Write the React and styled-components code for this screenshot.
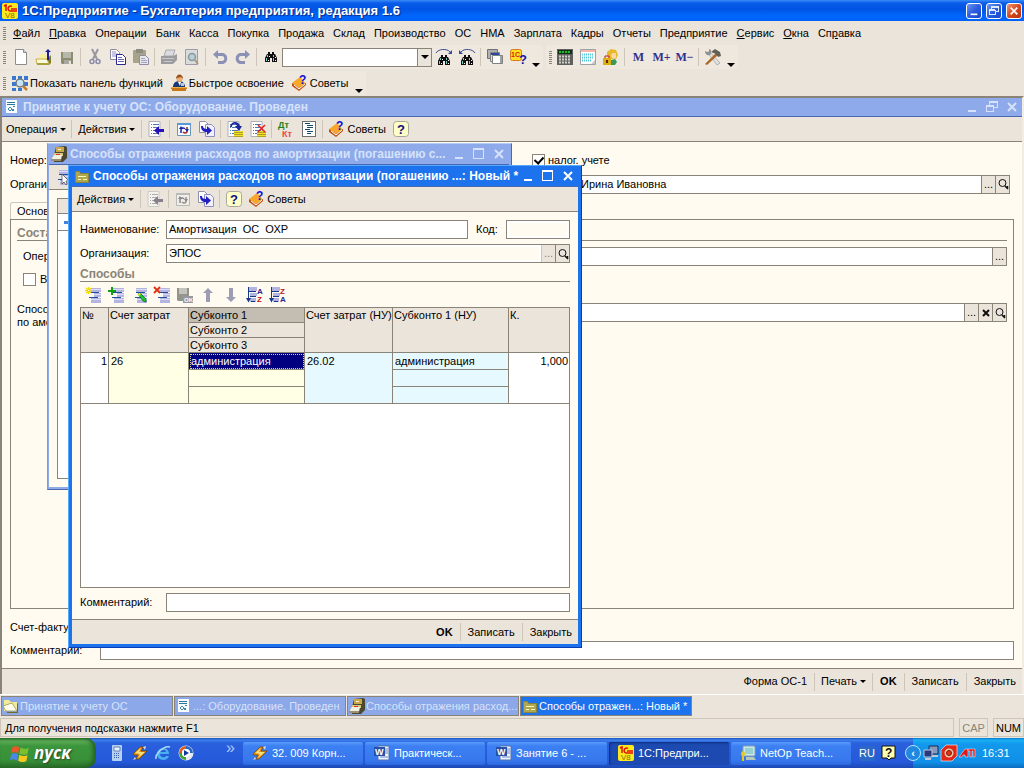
import React from 'react';
import styled, { createGlobalStyle } from 'styled-components';

/* ---------- icons ---------- */

const listLines = (
  <>
    <path d="M5 1h11v4H5zM9 6h7v4H9zM6 11h10v5H6z" fill="#b4b4e0" />
    <path d="M5 2h11v1H5zM9 7h7v1H9zM6 12h10v1H6z" fill="#dcdcf8" />
    <path d="M5 5h9v1H5zM4 10h9v1H4z" fill="#20509c" />
  </>
);

const sheet = (
  <>
    <path d="M1 .5h11v15H1z" fill="#fff" stroke="#b0b0b8" />
    <path d="M3 3h1v1H3zM5 3h6v1H5zM3 6h1v1H3zM5 6h6v1H5zM3 9h1v1H3zM5 9h6v1H5zM3 12h1v1H3zM5 12h6v1H5z" fill="#5078b0" />
  </>
);

const binoculars = (
  <>
    <path d="M5 4h2v2h2V4h2v2h1l2 4v4h-5v-4H7v4H2v-4l2-4h1z" fill="#101010" />
    <path d="M4 7h1v2H4zM3 10h1v3H3zM10 7h1v2h-1zM10 10h1v3h-1z" fill="#78d0c8" />
    <path d="M6 8h1v1H6zM12 9h1v1h-1zM5 12h1v1H5zM12 12h1v1h-1z" fill="#fff" />
  </>
);

const sortLines = (
  <>
    <path d="M3 0h8v4H3zM4 6h7v3H4zM4 11h6v4H4z" fill="#b4b4e0" />
    <path d="M2 0h1v11h2l-2.500 4.500L0 11h2zM3 4h7v1H3zM4 9h6v1H4zM5 14h4v1H5z" fill="#183888" />
  </>
);

const drawings = {
  v8: (
    <>
      <rect width="16" height="16" rx="2" fill="#ffe81c" />
      <path d="M2 3l2-1v6M10 3.500a2.500 2.500 0 1 0-1 4.500h6M9 6h6" fill="none" stroke="#e01010" strokeWidth="1.500" />
      <text x="3" y="15" fontSize="8" fontFamily="Liberation Sans" fill="#807000">V8</text>
    </>
  ),
  newDoc: (
    <>
      <path d="M2.500 .5h8l3 3v12h-11z" fill="#fff" stroke="#8c8c8c" />
      <path d="M10.500 .5v3h3" fill="#dcdcdc" stroke="#8c8c8c" />
    </>
  ),
  open: (
    <>
      <path d="M3 5h6l1 2h5v8H3z" fill="#f4f09c" />
      <path d="M11 10l4-4v8l-2 2h-2z" fill="#807c30" />
      <path d="M0 10h11l2 5H1z" fill="#f8f8e0" stroke="#c8b440" strokeWidth="1" />
      <path d="M1 14h12v2H1z" fill="#a8a038" />
      <path d="M12 11h1V3h2L12 0 9 3h2v8z" fill="#202090" />
    </>
  ),
  save: (
    <>
      <path d="M2 3h12v12H3l-1-1z" fill="#8c8c70" />
      <path d="M4 3h8v6H4z" fill="#b8b8a8" />
      <path d="M5 11h7v4H5z" fill="#a8a8a0" />
      <path d="M10 12h2v3h-2z" fill="#e8e4dc" />
    </>
  ),
  cut: (
    <>
      <path d="M5 0l5 10M11 0L6 10" stroke="#98989c" strokeWidth="2" fill="none" />
      <circle cx="5" cy="12.500" r="2" stroke="#8c8ca8" strokeWidth="1.500" fill="none" />
      <circle cx="11" cy="12.500" r="2" stroke="#8c8ca8" strokeWidth="1.500" fill="none" />
    </>
  ),
  copy: (
    <>
      <path d="M.5 .5h6l3 3v7h-9z" fill="#fff" stroke="#8c8c9c" />
      <path d="M2 3h4M2 5h6M2 7h6" stroke="#8c8cc0" />
      <path d="M6.500 5.500h6l3 3v7h-9z" fill="#fff" stroke="#282890" />
      <path d="M8 8.500h4M8 10.500h6M8 12.500h6" stroke="#6868b8" />
    </>
  ),
  paste: (
    <>
      <rect x="0" y="1" width="13" height="13" rx="1" fill="#a8a48c" />
      <path d="M3 0h7v4H3z" fill="#8c8c80" />
      <path d="M6.500 6.500h6l3 3v6h-9z" fill="#e8e8ec" stroke="#8c8ca8" />
      <path d="M8 9.500h4M8 11.500h6M8 13.500h6" stroke="#a0a0c0" />
    </>
  ),
  print: (
    <>
      <path d="M5 1h9l-2 6H3z" fill="#dcdce0" stroke="#a8a8b0" strokeWidth="1" />
      <path d="M0 7h12l4-2v6l-4 4H0z" fill="#9c9ca0" />
      <path d="M1 9h12v1H1zM3 12h8v1H3z" fill="#c8c8cc" />
    </>
  ),
  preview: (
    <>
      <path d="M1.500 .5h12v15h-12z" fill="#d8dcdc" stroke="#9c9ca4" />
      <circle cx="8" cy="8" r="3.500" fill="#b8d0d4" stroke="#88989c" strokeWidth="1.500" />
      <path d="M11 11l3 4" stroke="#a89880" strokeWidth="2" />
    </>
  ),
  undo: <path d="M6 1L1 5.500l5 4.500V7h4c3 0 3 5 0 5H6v3h4c7 0 7-11 0-11H6z" fill="#8c90b4" />,
  redo: <path d="M10 1l5 4.500-5 4.500V7H6c-3 0-3 5 0 5h4v3H6C-1 15-1 4 6 4h4z" fill="#8c90b4" />,
  find: <g transform="translate(0 -1)">{binoculars}</g>,
  findNext: (
    <>
      <g transform="translate(0 2)">{binoculars}</g>
      <path d="M0 4c2-4 11-5 14-1" stroke="#384898" fill="none" />
      <path d="M16 1v4h-4z" fill="#384898" />
    </>
  ),
  findPrev: (
    <>
      <g transform="translate(0 2)">{binoculars}</g>
      <path d="M16 4C14 0 5-1 2 3" stroke="#384898" fill="none" />
      <path d="M0 1v4h4z" fill="#384898" />
    </>
  ),
  windows: (
    <>
      <path d="M.5 .5h10v9H.5z" fill="#b0b0b0" stroke="#707070" />
      <path d="M3.500 3.500h9v9h-9z" fill="#f0e890" stroke="#808080" />
      <path d="M4 4h8v2H4z" fill="#2848a8" />
      <path d="M5.500 6.500h10v8h-10z" fill="#fff" stroke="#808080" />
      <path d="M13 7h2v7h-2z" fill="#a0a0a0" />
    </>
  ),
  about: (
    <>
      <rect x=".5" y=".5" width="11" height="11" rx="2" fill="#ffe01c" stroke="#d87818" />
      <text x="1" y="8" fontSize="7" fontWeight="bold" fontFamily="Liberation Sans" fill="#d82010">1С</text>
      <text x="9" y="15" fontSize="13" fontWeight="bold" fontFamily="Liberation Sans" fill="#1818a0">?</text>
    </>
  ),
  calc: (
    <>
      <path d="M0 0h16v16H0z" fill="#606060" />
      <path d="M1 1h14v4H1z" fill="#103010" />
      <path d="M2 3h12" stroke="#18c030" strokeWidth="2" strokeDasharray="2 1" />
      <path d="M2 7.500h12M2 10.500h12M2 13.500h12" stroke="#d0d0c8" strokeWidth="2" strokeDasharray="2 1" />
    </>
  ),
  calendar: (
    <>
      <path d="M.5 .5h15v15H.5z" fill="#fff" stroke="#a0a0a8" />
      <path d="M1 1h14v2H1z" fill="#f8b8a8" />
      <path d="M2 5.500h12M2 8.500h12M2 11.500h9" stroke="#50c8d8" strokeWidth="2" strokeDasharray="1 1" />
      <path d="M12 14l3-3v4h-4z" fill="#c8c8c8" />
    </>
  ),
  user: (
    <>
      <path d="M4 3l4-3 5 1 2 5-2 4H7L4 7z" fill="#e8b828" />
      <path d="M9 4h4v5l-3 1-2-3z" fill="#f8d8a8" />
      <path d="M8 11l4-1 2 3-2 3H7z" fill="#409858" />
      <path d="M0 9h8v7H0z" fill="#d8b010" />
      <path d="M2 9V7h4v2" stroke="#c02020" fill="none" />
      <path d="M3 11h2v3H3z" fill="#702010" />
    </>
  ),
  tools: (
    <>
      <path d="M2 3l10 13 3-2L5 3z" fill="#e0e0e0" stroke="#909090" strokeWidth=".6" />
      <path d="M11 4L0 15l2 1L13 6z" fill="#a86828" />
      <path d="M6 3l4-3 5 3 1 4-3 1-2-3z" fill="#606058" />
      <path d="M0 2c0 4 3 5 5 4l1-2V1L4 0v3H2z" fill="#909090" />
    </>
  ),
  functions: (
    <>
      <path d="M0 1h4v4H0zM6 1h4v4H6zM12 1h4v4h-4zM0 7h4v4H0zM0 13h4v3H0zM12 7h4v4h-4zM6 13h4v3H6z" fill="#3878d0" />
      <circle cx="8" cy="8" r="4" fill="#c8e4f4" stroke="#707880" strokeWidth="1.500" />
      <path d="M11 11l4 4" stroke="#c87828" strokeWidth="2.500" />
    </>
  ),
  quick: (
    <>
      <path d="M2 12c0-4 3-6 6-6s6 2 6 6z" fill="#183878" />
      <path d="M7 7h3l-1 4z" fill="#fff" />
      <circle cx="8.500" cy="4" r="3" fill="#e8b078" />
      <path d="M5 4c0-6 7-6 7 0l-2-2-4 1z" fill="#985018" />
      <path d="M10 8h3v3h-3z" fill="#b8c8d8" />
      <path d="M0 12h16v2h-1v2H1v-2H0z" fill="#c87818" />
      <path d="M0 12h16v1H0z" fill="#f0b048" />
    </>
  ),
  tips: (
    <>
      <path d="M0 8l8-6 6 7-7 4z" fill="#f8a828" />
      <path d="M0 8v3l7 5 7-6V8l-7 5z" fill="#c05010" />
      <path d="M2 10l5 4 6-5" stroke="#fff" fill="none" />
      <text x="7" y="9" fontSize="12" fontWeight="bold" fontFamily="Liberation Sans" fill="#1010d0">?</text>
    </>
  ),
  help: (
    <>
      <rect x=".5" y=".5" width="15" height="15" rx="3" fill="#ffffc8" stroke="#a8a898" />
      <text x="4" y="13" fontSize="13" fontWeight="bold" fontFamily="Liberation Sans" fill="#101080">?</text>
    </>
  ),
  doc: (
    <>
      <path d="M2 1h11v13H2z" fill="#f8fcff" />
      <path d="M3 3h8v1H3zM3 5h8v1H3z" fill="#2878a0" />
      <path d="M5 8h2v1h1v2H7v1H5v-1H4V9h1zM9 7h2v1H9zM8 10h2v2H8z" fill="#3888b0" />
      <path d="M5 9h2v2H5z" fill="#fff" />
    </>
  ),
  goto: (
    <>
      {sheet}
      <path d="M6 9.500L11 5v3h5v3h-5v3z" fill="#2810b8" />
    </>
  ),
  refresh: (
    <>
      <path d="M1.500 2.500h13v12h-13z" fill="#f4f8ff" stroke="#6898b8" />
      <path d="M1 2h14v2H1z" fill="#5898d8" />
      <path d="M5 12V9c0-2 3-3 4-1" stroke="#1828a0" fill="none" strokeWidth="1.500" />
      <path d="M11 6v4c0 3-3 2-4 1" stroke="#a02828" fill="none" strokeWidth="1.500" />
      <path d="M3 8h4l-2-3zM9 8h4l-2 3z" fill="#1828a0" />
    </>
  ),
  copyTo: (
    <>
      <path d="M.5 .5h6l3 3v8h-9z" fill="#fff" stroke="#9090a8" />
      <path d="M6.500 3.500h6l3 3v9h-9z" fill="#f0f0ff" stroke="#9090c0" />
      <path d="M2 5h2c0 2 1 3 4 3V5l5 4.500L8 14v-3C4 11 2 9 2 5z" fill="#2020c0" />
    </>
  ),
  post: (
    <>
      {sheet}
      <path d="M7 10h9v6H7z" fill="#f0e028" />
      <path d="M7 11.500h9M7 13.500h9M7 15.500h9" stroke="#b0a020" />
      <path d="M3 6c1-7 9-6 10-1h2l-3 5-4-5h2C9 2 5 2 5 6z" fill="#1828a0" />
    </>
  ),
  unpost: (
    <>
      {sheet}
      <path d="M7 10h9v6H7z" fill="#f0e028" />
      <path d="M7 11.500h9M7 13.500h9M7 15.500h9" stroke="#b0a020" />
      <path d="M8 4l7 7M15 4l-7 7" stroke="#e02020" strokeWidth="1.500" />
    </>
  ),
  debit: (
    <>
      <text x="0" y="7" fontSize="9" fontWeight="bold" fontFamily="Liberation Sans" fill="#288018">Дт</text>
      <text x="4" y="16" fontSize="9" fontWeight="bold" fontFamily="Liberation Sans" fill="#f04840">Кт</text>
    </>
  ),
  structure: (
    <>
      <path d="M1.500 .5h13v15h-13z" fill="#fff" stroke="#707070" />
      <path d="M1 0h1v16H1zM14 0h1v16h-1z" fill="#707070" />
      <path d="M4 2.500h5M6 4.500h6M6 6.500h6M4 8.500h5M6 10.500h6M6 12.500h4" stroke="#184868" />
    </>
  ),
  cabinet: (
    <>
      <path d="M5 1l9-1 2 1v11l-4 4H3V9z" fill="#4c4830" />
      <path d="M5 1h8v5H5z" fill="#c8a848" />
      <path d="M3 7h9v3H3z" fill="#d8c888" />
      <path d="M1 12l2-3h8l-1 5H1z" fill="#f0f0e0" />
      <path d="M7 3h3v1H7z" fill="#f8f8e0" />
      <path d="M5 8h4v1H5z" fill="#d83818" />
      <path d="M0 13h10v2H0z" fill="#989070" />
    </>
  ),
  folder: (
    <>
      <path d="M1.500 3.500h4l1 2h8v9h-13z" fill="#b0a850" stroke="#88843c" />
      <path d="M4 8h8v1H4zM4 11h3v1H4zM9 11h4v1H9z" fill="#fff8b8" />
    </>
  ),
  folderOpen: (
    <>
      <path d="M1 2h5l2 2h6v9H1z" fill="#f0ec98" />
      <path d="M0 8l9-3 5 8H3z" fill="#fdfdf0" stroke="#a09848" strokeWidth=".8" />
      <path d="M14 5l1 1v9H4v-1h10z" fill="#706c28" />
    </>
  ),
  rowNew: (
    <>
      {listLines}
      <path d="M3.500 0v7M0 3.500h7M1 1l5 5M6 1L1 6" stroke="#f0d800" strokeWidth="1.200" />
      <path d="M3 3h1v1H3z" fill="#fff" />
    </>
  ),
  rowAdd: (
    <>
      {listLines}
      <path d="M3 0h2v3h3v2H5v3H3V5H0V3h3z" fill="#10a010" />
    </>
  ),
  rowEdit: (
    <>
      {listLines}
      <path d="M7 7l2-1 6 6v3l-3-1z" fill="#18c830" stroke="#086018" strokeWidth=".7" />
      <path d="M7 7l2-1 1 1-2 2z" fill="#f8e820" />
    </>
  ),
  rowDelete: (
    <>
      {listLines}
      <path d="M0 0l6 6M6 0L0 6" stroke="#e03010" strokeWidth="1.800" />
    </>
  ),
  rowSave: (
    <>
      <path d="M0 1h12v13H1l-1-1z" fill="#94948c" />
      <path d="M2 1h8v6H2z" fill="#c4c4bc" />
      <path d="M6 9h10v7H6z" fill="#9898a0" />
      <text x="7" y="15" fontSize="6" fontWeight="bold" fontFamily="Liberation Sans" fill="#fff">OK</text>
    </>
  ),
  up: <path d="M8 1l5 5h-3v9H6V6H3z" fill="#9c9cb4" />,
  down: <path d="M8 15l5-5h-3V1H6v9H3z" fill="#9c9cb4" />,
  sortAsc: (
    <>
      {sortLines}
      <text x="11" y="7" fontSize="8" fontWeight="bold" fontFamily="Liberation Sans" fill="#302890">A</text>
      <text x="11" y="15" fontSize="8" fontWeight="bold" fontFamily="Liberation Sans" fill="#c01020">Z</text>
    </>
  ),
  sortDesc: (
    <>
      {sortLines}
      <text x="11" y="7" fontSize="8" fontWeight="bold" fontFamily="Liberation Sans" fill="#c01020">Z</text>
      <text x="11" y="15" fontSize="8" fontWeight="bold" fontFamily="Liberation Sans" fill="#302890">A</text>
    </>
  ),
  rowCursor: (
    <>
      {listLines}
      <path d="M8 5v10l2-2 2 3 1-1-1-3h3z" fill="#fff" stroke="#404040" strokeWidth=".7" />
    </>
  ),
  flag: (
    <>
      <path d="M1 3c3-2 5-1 6 0L6 8C5 7 3 6 0 8z" fill="#e85828" />
      <path d="M8 3c2 1 5 2 7 0l-1 5c-2 2-5 1-7 0z" fill="#78c030" />
      <path d="M0 9c3-2 5-1 6 0l-1 5c-2-1-4-2-6 0z" fill="#4888e8" />
      <path d="M7 9c2 1 5 2 7 0l-1 5c-2 2-5 1-7 0z" fill="#f8c820" />
    </>
  ),
  pda: (
    <>
      <rect x="3" y="0" width="10" height="16" rx="1" fill="#b8d0f0" />
      <path d="M5 2h6v4H5z" fill="#e8f4ff" stroke="#6080b8" />
      <path d="M5 8.500h6M5 10.500h6M5 12.500h6" stroke="#3860a8" strokeDasharray="1 1" />
    </>
  ),
  winamp: (
    <>
      <path d="M2 8l6-6h3L9 6h6l-8 8H4l2-4H1z" fill="#e89018" stroke="#784808" strokeWidth=".8" />
      <path d="M3 8l6-5-2 4h6l-7 6 2-4z" fill="#f8e078" />
      <path d="M11 2l3-1-1 4zM3 12l-2 3 3-1z" fill="#d8d8d8" />
    </>
  ),
  ie: (
    <>
      <path d="M14 9H5c0 4 5 4 6 2h3c-2 6-12 5-12-2s12-8 12 0zM5 7h6C11 4 5 4 5 7z" fill="#48b0f0" />
      <path d="M1 14C0 9 9 0 15 2" fill="none" stroke="#a8dcf8" strokeWidth="1.500" />
    </>
  ),
  player: (
    <>
      <circle cx="8" cy="8" r="7.500" fill="#e8e8f0" />
      <path d="M8 1a7 7 0 0 0-7 7h3a4 4 0 0 1 4-4z" fill="#e06018" />
      <path d="M8 1a7 7 0 0 1 7 7h-3a4 4 0 0 0-4-4z" fill="#2868c8" />
      <path d="M8 15a7 7 0 0 1-7-7h3a4 4 0 0 0 4 4z" fill="#48a030" />
      <circle cx="8" cy="8" r="4" fill="#fff" />
      <path d="M6 5l5 3-5 3z" fill="#1838a0" />
    </>
  ),
  word: (
    <>
      <path d="M4 1h11v14H4z" fill="#f0f4ff" stroke="#5070b0" />
      <path d="M11 4h3M11 6h3M11 8h3M6 12h8" stroke="#6888c8" />
      <path d="M0 2h11v9H0z" fill="#2850a8" />
      <text x="1" y="10" fontSize="9" fontWeight="bold" fontFamily="Liberation Sans" fill="#fff">W</text>
    </>
  ),
  netop: (
    <>
      <rect x="3" y="1" width="12" height="10" rx="1" fill="#c8e8e8" stroke="#88a0b0" />
      <path d="M5 3h8v6H5z" fill="#98d0d0" />
      <path d="M6 12h8l2 3H6z" fill="#b8c8b8" />
      <path d="M3 6a3 3 0 0 1 1 5v5H2v-5a3 3 0 0 1 1-5z" fill="#e8c820" />
    </>
  ),
  langHelp: (
    <>
      <path d="M1 1h13v12h-4l-2 2-2-2H1z" fill="#ffffb0" stroke="#101010" />
      <text x="4" y="12" fontSize="12" fontWeight="bold" fontFamily="Liberation Sans" fill="#101010">?</text>
    </>
  ),
  network: (
    <>
      <path d="M6 1h9v8H6z" fill="#8898b8" stroke="#182858" />
      <path d="M1 5h8v7H1z" fill="#283878" stroke="#b8c8e8" />
      <path d="M2 13h6v2H2zM9 10h6v2H9z" fill="#c0c8d8" />
    </>
  ),
  shield: (
    <>
      <path d="M5 0h11v11l-5 5H0V5z" fill="#e02818" stroke="#fff" strokeWidth=".6" />
      <circle cx="8" cy="8" r="4.500" fill="#e8c8a0" />
      <circle cx="8" cy="8" r="2.500" fill="#d83818" stroke="#901008" />
    </>
  ),
  ati: (
    <>
      <path d="M0 12l6-8h3v8H6v-2H4l-1 2z" fill="#e01818" stroke="#fff" strokeWidth=".5" />
      <path d="M9 4h7v8h-2V6h-1v6h-2V6H9z" fill="#e01818" stroke="#fff" strokeWidth=".5" />
    </>
  ),
  lens: (
    <>
      <circle cx="7.500" cy="7" r="3.500" fill="none" stroke="#101010" />
      <path d="M10 10l3 3M12.500 10v3" stroke="#101010" strokeWidth="1.500" />
    </>
  ),
  clear: <path d="M5 5l6 6M11 5l-6 6" stroke="#101010" strokeWidth="2" fill="none" />,
};

const Svg = styled.svg`
  display: block;
  flex: none;
  overflow: visible;
  ${({ $off }) => $off && 'filter: grayscale(0.8); opacity: 0.5;'}
`;

const Icon = ({ name, off }) => (
  <Svg width="16" height="16" viewBox="0 0 16 16" aria-hidden="true" $off={off}>{drawings[name]}</Svg>
);

const MinGlyph = () => <Svg width="12" height="12" viewBox="0 0 12 12"><path d="M2 9h8v2H2z" fill="currentColor" /></Svg>;
const MaxGlyph = () => (
  <Svg width="12" height="12" viewBox="0 0 12 12" shapeRendering="crispEdges">
    <path d="M.5 .5h10v10H.5zM.5 1.500h10" fill="none" stroke="currentColor" />
  </Svg>
);
const RestoreGlyph = () => (
  <Svg width="12" height="12" viewBox="0 0 12 12" shapeRendering="crispEdges">
    <path d="M3.500 4V.5h8v6H8M3.500 1.500h8M.500 4.500h7v6h-7zM.5 5.500h7" fill="none" stroke="currentColor" />
  </Svg>
);
const CloseGlyph = () => <Svg width="12" height="12" viewBox="0 0 12 12"><path d="M2 2l8 8M10 2l-8 8" fill="none" stroke="currentColor" strokeWidth="2" /></Svg>;

/* ---------- shared parts ---------- */

const GlobalStyle = createGlobalStyle`
  * { box-sizing: border-box; }
  body { margin: 0; }
  body, button, input, select, table {
    font: 11px/13px 'Liberation Sans', Arial, sans-serif;
    color: #000;
  }
  button { background: none; border: 0; padding: 0; }
`;

const Screen = styled.div`
  display: flex;
  flex-direction: column;
  min-height: 100vh;
  background: #ebe4da;
  overflow: hidden;
  white-space: nowrap;
`;

const AppTitle = styled.header`
  display: flex;
  align-items: center;
  gap: 4px;
  height: 21px;
  padding: 0 2px;
  background: linear-gradient(#3a8cf8 0, #0a5cea 3px, #0054e3 9px, #0066fc 16px, #0062f8 21px);
  color: #fff;

  h1 {
    flex: 1;
    margin: 0;
    font: bold 13px/20px 'Liberation Sans', Arial, sans-serif;
    text-shadow: 1px 1px 1px #0a2a80;
  }
`;

const CaptionButton = styled.button`
  display: flex;
  align-items: center;
  justify-content: center;
  width: 16px;
  height: 16px;
  border: 1px solid #fff;
  border-radius: 3px;
  background: ${({ $close }) => ($close ? 'linear-gradient(135deg, #f09878, #d84820 50%, #b83010)' : 'linear-gradient(135deg, #7098f0, #2c5ce0 50%, #1848c8)')};
  color: #fff;

  svg { width: 10px; height: 10px; }
`;

const MenuBar = styled.nav`
  display: flex;
  align-items: center;
  gap: 9px;
  height: 24px;
  padding-left: 3px;

  a {
    color: #000;
    text-decoration: none;
  }
`;

const Grip = styled.span`
  width: 3px;
  height: 13px;
  margin-right: ${({ $space }) => $space || 3}px;
  background: repeating-linear-gradient(#8a8478 0 1px, transparent 1px 2px);
`;

const Toolbars = styled.div`
  display: flex;
  gap: 3px;
  padding-bottom: ${({ $below }) => $below}px;
`;

const Toolbar = styled.div`
  display: flex;
  align-items: center;
  height: 24px;
  padding-left: 3px;
  background: #eee8df;
  border-radius: 3px;
`;

const IconButton = styled.button`
  display: flex;
  align-items: center;
  justify-content: center;
  flex: none;
  width: 23px;
  height: 22px;
`;

const MemoryButton = styled(IconButton)`
  font: bold 12px/13px 'Liberation Serif', serif;
  color: #303090;
`;

const TextButton = styled.button`
  display: flex;
  align-items: center;
  gap: 2px;
  height: 22px;
  padding: 0 ${({ $pad }) => $pad || 4}px;
  font-weight: ${({ $bold }) => ($bold ? 'bold' : 'normal')};
`;

const Divider = styled.span`
  flex: none;
  width: 1px;
  height: 18px;
  margin: 0 2px;
  background: #cdc5b8;
`;

const Caret = styled.span`
  margin-left: 1px;
  border: solid transparent;
  border-width: 3px 3px 0;
  border-top-color: #000;
`;

const DropMark = styled.i`
  display: block;
  border: solid transparent;
  border-width: 4px 4px 0;
  border-top-color: #000;
`;

const MoreButton = styled.button`
  align-self: flex-end;
  height: 8px;
  padding: 0 3px;
`;

const ComboBox = styled.div`
  display: flex;
  width: 150px;
  height: 19px;
  border: 1px solid #8a8478;
  background: #fff;

  select {
    flex: 1;
    min-width: 0;
    border: 0;
    background: #fff;
    appearance: none;
  }

  span {
    display: flex;
    align-items: center;
    justify-content: center;
    width: 14px;
    border-left: 1px solid #8a8478;
    background: #ebe4da;
    pointer-events: none;
  }
`;

const ActionBar = styled.div`
  display: flex;
  align-items: center;
  justify-content: ${({ $end }) => ($end ? 'flex-end' : 'flex-start')};
  flex: none;
  height: ${({ $height }) => $height || 25}px;
  padding: 0 1px;
  background: #ebe4da;
  border: solid #8a8478;
  border-width: ${({ $end }) => ($end ? '1px 0 0' : '0 0 1px')};
`;

const WindowTitle = styled.div`
  display: flex;
  align-items: center;
  flex: none;
  gap: 3px;
  height: ${({ $height }) => $height || 21}px;
  padding-right: 4px;
  padding-left: 2px;
  background: ${({ $active }) => ($active ? '#1d72ee' : '#8eaaea')};
  border-bottom: 1px solid #4a68b0;
  color: ${({ $active }) => ($active ? '#fff' : '#d6e2fb')};

  h2 {
    flex: 1;
    margin: 0;
    font: bold 12px/18px 'Liberation Sans', Arial, sans-serif;
  }
`;

const WindowControls = styled.div`
  display: flex;
  flex: none;
  gap: 8px;

  button { color: inherit; }
`;

const Field = styled.div`
  display: flex;
  flex: ${({ $width }) => ($width ? `0 0 ${$width}px` : '1')};
  min-width: 0;
  height: 19px;
  border: 1px solid #8a8478;
  background: #fff;

  input {
    flex: 1;
    min-width: 0;
    padding: 0 ${({ $locked }) => ($locked ? 0 : 2)}px;
    border: ${({ $locked }) => ($locked ? '2px solid #fff' : '0')};
    background: ${({ $locked }) => ($locked ? '#fffbf0' : '#fff')};
    outline: 0;
  }

  button {
    display: flex;
    align-items: center;
    justify-content: center;
    width: 14px;
    border-left: 1px solid #8a8478;
    background: #ebe4da;
  }

  button:disabled {
    border-left-color: #cdc5b8;
    color: #8a8478;
  }
`;

const GroupTitle = styled.h3`
  flex: none;
  height: 14px;
  margin: 0;
  border-bottom: 1px solid #8a8478;
  color: #8a8478;
  font: bold 12px/13px 'Liberation Sans', Arial, sans-serif;
`;

const CheckBox = styled.input`
  appearance: none;
  display: grid;
  place-items: center;
  width: 13px;
  height: 13px;
  margin: 0;
  border: 1px solid #8a8478;
  background: #fff;

  &:checked::before {
    content: '';
    width: 4px;
    height: 7px;
    margin-bottom: 2px;
    border: solid #000;
    border-width: 0 2px 2px 0;
    transform: rotate(42deg);
  }
`;

/* ---------- document window ---------- */

const Workspace = styled.main`
  position: relative;
  display: flex;
  flex: 1;
  flex-direction: column;
  border: 2px solid #8a8478;
  border-right-color: #f2ede4;
  border-bottom: 0;
  background: #fffbf0;
`;

const DocBody = styled.div`
  display: flex;
  flex: 1;
  flex-direction: column;
  padding: 6px 8px 2px;
`;

const DocRow = styled.div`
  display: flex;
  align-items: center;
  flex: none;
  height: 24px;
  padding-right: ${({ $right }) => $right || 0}px;

  > label:first-child, > span:first-child { width: 90px; }
`;

const InvoiceRow = styled(DocRow)`
  margin-top: 6px;
`;

const CommentRow = styled(DocRow)`
  height: 19px;
  margin-bottom: 8px;
  padding: 0 8px;
`;

const RightHalf = styled.div`
  display: flex;
  align-items: center;
  flex: 1;
  gap: 3px;
  margin-left: ${({ $left }) => $left}px;
`;

const TabHead = styled.button`
  align-self: flex-start;
  height: 17px;
  margin-top: 6px;
  padding: 0 6px;
  border: 1px solid #cdc5b8;
  border-bottom: 0;
  border-radius: 3px 3px 0 0;
  background: #fffbf0;
`;

const TabPanel = styled.section`
  display: flex;
  flex: 1;
  flex-direction: column;
  padding: 7px 6px;
  border: 1px solid #8a8478;
`;

const PanelRow = styled(DocRow)`
  align-items: ${({ $top }) => ($top ? 'flex-start' : 'center')};
  gap: 4px;
  height: auto;
  min-height: 19px;
  margin-top: ${({ $gap }) => $gap}px;
  padding-left: ${({ $indent }) => $indent || 0}px;
`;

/* ---------- floating windows ---------- */

const FloatWindow = styled.section`
  position: absolute;
  left: ${({ $x }) => $x}px;
  top: ${({ $y }) => $y}px;
  display: flex;
  flex-direction: column;
  width: ${({ $w }) => $w}px;
  height: ${({ $h }) => $h}px;
  padding: ${({ $active }) => ($active ? '0 3px 3px' : '0 2px 2px 1px')};
  border: 1px solid;
  border-color: ${({ $active }) => ($active ? '#54aaff #0a3cb8 #0a3cb8 #54aaff' : '#b4ccf8 #4a68b0 #4a68b0 #7c9ce0')};
  background: ${({ $active }) => ($active ? '#1d72ee' : '#8eaaea')};
`;

const ListBody = styled.div`
  flex: 1;
  padding: 8px;
  background: #fffbf0;
`;

const ListBox = styled.div`
  height: 100%;
  border: 1px solid #8a8478;
  background: #fff;
`;

const ListHead = styled.div`
  height: 15px;
  border-bottom: 1px solid #8a8478;
  background: #ebe4da;
`;

const ListRow = styled.div`
  height: 17px;
  padding: 7px 6px;
  border-bottom: 1px solid #8a8478;

  &::before {
    content: '';
    display: block;
    width: 10px;
    height: 3px;
    background: #4880e0;
  }
`;

const DialogBody = styled.div`
  display: flex;
  flex: 1;
  flex-direction: column;
  gap: 5px;
  padding: 8px 8px 7px;
  background: #fffbf0;
`;

const DialogRow = styled.div`
  display: flex;
  align-items: center;
  flex: none;
  height: 19px;

  > label:first-child { width: 86px; }
  > label:nth-of-type(2) { width: 30px; margin-left: 8px; }
`;

const WaysSection = styled.section`
  display: flex;
  flex: 1;
  flex-direction: column;
`;

const RowTools = styled.div`
  display: flex;
  flex: none;
  height: 25px;
  padding: 2px 0 0 1px;
`;

const GridBox = styled.div`
  flex: 1;
  border: 1px solid #8a8478;
  border-top: 0;
  background: #fff;
`;

const Grid = styled.table`
  width: calc(100% + 2px);
  margin: 0 -1px;
  border-collapse: collapse;
  table-layout: fixed;

  th, td {
    border: 1px solid #8a8478;
    font-weight: normal;
    text-align: left;
    vertical-align: top;
    line-height: 13px;
  }

  th { height: 15px; padding: 1px 1px 0; background: #ebe4da; }
  td { height: 17px; padding: 2px 2px 0; }
`;

const HeadCell = styled.th`
  && { background: ${({ $current }) => ($current ? '#c4bdb2' : '#ebe4da')}; }
`;

const Cell = styled.td`
  background: ${({ $tone }) => ({ yellow: '#ffffe6', blue: '#e6f9ff' }[$tone] || '#fff')};
  ${({ $selected }) => $selected && 'background: #000080; color: #fff; outline: 1px dotted #d8d890; outline-offset: -2px;'}
  && { text-align: ${({ $right }) => ($right ? 'right' : 'left')}; ${({ $right }) => $right && 'padding-right: 1px;'} }
`;

/* ---------- bottom bars ---------- */

const WindowTabs = styled.nav`
  display: flex;
  gap: 1px;
  height: 24px;
  padding: 1px 1px 0;
  border-top: 1px solid #fff;
`;

const WindowTab = styled.button`
  display: flex;
  align-items: center;
  gap: 1px;
  width: 172px;
  height: 20px;
  overflow: hidden;
  padding-left: 1px;
  border: 1px solid #8a8478;
  background: ${({ $active }) => ($active ? '#1d72ee' : '#8ca8e8')};
  color: ${({ $active }) => ($active ? '#fff' : '#d6e2fb')};
`;

const StatusBar = styled.footer`
  display: flex;
  gap: 5px;
  height: 20px;
  padding-bottom: 1px;
`;

const StatusCell = styled.span`
  flex: ${({ $wide }) => ($wide ? 1 : 'none')};
  padding: 3px 2px 2px ${({ $wide }) => ($wide ? 4 : 2)}px;
  border: 1px solid #cdc5b8;
  color: ${({ $off }) => ($off ? '#8a8478' : '#000')};
`;

const TaskBar = styled.div`
  display: flex;
  height: 30px;
  background: linear-gradient(#1c50b8 0, #3c80ee 2px, #2a60dc 5px, #245ada 24px, #1c48b4 30px);
  color: #fff;
`;

const StartButton = styled.button`
  display: flex;
  align-items: center;
  gap: 4px;
  width: 96px;
  padding-left: 11px;
  border-radius: 0 10px 10px 0;
  background: linear-gradient(#2c7c2c 0, #5cac58 3px, #3c963c 8px, #389038 22px, #286c28 30px);
  box-shadow: inset -3px 0 4px #246024;
  color: #fff;
  font: italic bold 17px/24px 'Open Sans', sans-serif;
  text-shadow: 1px 1px 2px #204820;

  svg { width: 19px; height: 19px; }
`;

const QuickLaunch = styled.div`
  display: flex;
  align-items: center;
  flex: none;
  width: 147px;
  padding-left: 9px;

  i {
    margin: 0 0 12px 29px;
    font: 16px/13px 'Liberation Sans', sans-serif;
    color: #a8ccff;
  }
`;

const Tasks = styled.div`
  display: flex;
  align-items: center;
  flex: 1;
  gap: 2px;
  min-width: 0;
`;

const TaskButton = styled.button`
  display: flex;
  align-items: center;
  gap: 4px;
  flex: 0 1 120px;
  height: 23px;
  overflow: hidden;
  padding-left: 9px;
  border-radius: 2px;
  background: ${({ $active }) => ($active ? '#1c4ab0' : 'linear-gradient(#5c9cfc 0, #3c80f2 4px, #3878ee 18px, #2c68dc 23px)')};
  box-shadow: ${({ $active }) => ($active ? 'inset 1px 1px 2px #0c2c78' : 'none')};
  color: #fff;
`;

const Language = styled.div`
  display: flex;
  align-items: center;
  gap: 6px;
  width: 54px;

  span {
    padding: 1px 0;
    background: #2c68c8;
  }
`;

const Tray = styled.div`
  display: flex;
  align-items: center;
  gap: 2px;
  flex: none;
  width: 111px;
  background: linear-gradient(#0c78d0 0, #18b0f4 2px, #1298ec 6px, #1090e8 24px, #0c6cc0 30px);

  time { margin-left: 5px; }
`;

const TrayToggle = styled.button`
  display: grid;
  place-items: center;
  width: 16px;
  height: 16px;
  margin-left: -8px;
  border: 1px solid #b8e0ff;
  border-radius: 8px;
  background: #2088e0;
  color: #fff;
  font-weight: bold;
`;

/* ---------- page ---------- */

const menu = [
  ['Ф', 'айл'], ['П', 'равка'], ['', 'Операции'], ['', 'Банк'], ['', 'Касса'], ['', 'Покупка'],
  ['', 'Продажа'], ['', 'Склад'], ['', 'Производство'], ['', 'ОС'], ['', 'НМА'], ['', 'Зарплата'],
  ['', 'Кадры'], ['', 'Отчеты'], ['', 'Предприятие'], ['С', 'ервис'], ['О', 'кна'],
];

const Tool = ({ name, off }) => (
  <IconButton type="button" aria-label={name}><Icon name={name} off={off} /></IconButton>
);

const More = () => <MoreButton type="button" aria-label="Еще"><DropMark /></MoreButton>;

const WindowButtons = ({ restore }) => (
  <WindowControls>
    <button type="button" aria-label="Свернуть"><MinGlyph /></button>
    <button type="button" aria-label="Развернуть">{restore ? <RestoreGlyph /> : <MaxGlyph />}</button>
    <button type="button" aria-label="Закрыть"><CloseGlyph /></button>
  </WindowControls>
);

const LookupButton = () => <button type="button" aria-label="Открыть"><Icon name="lens" /></button>;

const MainToolbars = () => (
  <>
    <Toolbars $below={2}>
      <Toolbar>
        <Grip />
        <Tool name="newDoc" /><Tool name="open" /><Tool name="save" />
        <Divider />
        <Tool name="cut" /><Tool name="copy" /><Tool name="paste" />
        <Divider />
        <Tool name="print" /><Tool name="preview" />
        <Divider />
        <Tool name="undo" /><Tool name="redo" />
        <Divider />
        <Tool name="find" />
        <ComboBox>
          <select aria-label="Поиск"><option> </option></select>
          <span><DropMark /></span>
        </ComboBox>
        <Tool name="findNext" /><Tool name="findPrev" />
        <Divider />
        <Tool name="windows" /><Tool name="about" />
        <More />
      </Toolbar>
      <Toolbar>
        <Grip $space={1} />
        <Tool name="calc" /><Tool name="calendar" /><Tool name="user" />
        <Divider />
        <MemoryButton type="button">M</MemoryButton>
        <MemoryButton type="button">M+</MemoryButton>
        <MemoryButton type="button">M−</MemoryButton>
        <Divider />
        <Tool name="tools" />
        <More />
      </Toolbar>
    </Toolbars>
    <Toolbars $below={1}>
      <Toolbar>
        <Grip $space={2} />
        <TextButton type="button"><Icon name="functions" />Показать панель функций</TextButton>
        <TextButton type="button"><Icon name="quick" />Быстрое освоение</TextButton>
        <TextButton type="button"><Icon name="tips" />Советы</TextButton>
        <More />
      </Toolbar>
    </Toolbars>
  </>
);

const DocumentWindow = () => (
  <>
    <WindowTitle $height={19}>
      <Icon name="doc" />
      <h2>Принятие к учету ОС: Оборудование. Проведен</h2>
      <WindowButtons restore />
    </WindowTitle>
    <ActionBar>
      <TextButton type="button" $pad={3}>Операция<Caret /></TextButton>
      <Divider />
      <TextButton type="button">Действия<Caret /></TextButton>
      <Divider />
      <Tool name="goto" />
      <Divider />
      <Tool name="refresh" /><Tool name="copyTo" />
      <Divider />
      <Tool name="post" /><Tool name="unpost" />
      <Divider />
      <Tool name="debit" /><Tool name="structure" />
      <Divider />
      <TextButton type="button"><Icon name="tips" />Советы</TextButton>
      <Tool name="help" />
    </ActionBar>
    <DocBody>
      <DocRow>
        <span>Номер:</span>
        <RightHalf $left={432}>
          <CheckBox type="checkbox" id="tax" defaultChecked />
          <label htmlFor="tax">налог. учете</label>
        </RightHalf>
      </DocRow>
      <DocRow $right={4}>
        <label htmlFor="person">Организация:</label>
        <RightHalf $left={478}>
          <Field>
            <input id="person" defaultValue="Ирина Ивановна" />
            <button type="button">...</button>
            <LookupButton />
          </Field>
        </RightHalf>
      </DocRow>
      <TabHead type="button">Основные</TabHead>
      <TabPanel>
        <GroupTitle>Состав</GroupTitle>
        <PanelRow $gap={6} $indent={6}>
          <label htmlFor="event">Операция:</label>
          <Field><input id="event" /><button type="button">...</button></Field>
        </PanelRow>
        <PanelRow $gap={4} $indent={6}>
          <CheckBox type="checkbox" id="include" />
          <label htmlFor="include">Ввод</label>
        </PanelRow>
        <PanelRow $gap={14} $top>
          <label htmlFor="way">Способ<br />по аморт.</label>
          <Field>
            <input id="way" />
            <button type="button">...</button>
            <button type="button" aria-label="Очистить"><Icon name="clear" /></button>
            <LookupButton />
          </Field>
        </PanelRow>
      </TabPanel>
      <InvoiceRow><span>Счет-фактура:</span></InvoiceRow>
    </DocBody>
    <CommentRow>
      <label htmlFor="comment">Комментарий:</label>
      <Field><input id="comment" /></Field>
    </CommentRow>
    <ActionBar $end $height={26}>
      <TextButton type="button" $pad={5}>Форма ОС-1</TextButton>
      <Divider />
      <TextButton type="button">Печать<Caret /></TextButton>
      <Divider />
      <TextButton type="button" $pad={5} $bold>OK</TextButton>
      <Divider />
      <TextButton type="button" $pad={5}>Записать</TextButton>
      <Divider />
      <TextButton type="button" $pad={5}>Закрыть</TextButton>
    </ActionBar>
  </>
);

const ListWindow = () => (
  <FloatWindow $x={45} $y={45} $w={465} $h={347}>
    <WindowTitle>
      <Icon name="cabinet" />
      <h2>Способы отражения расходов по амортизации (погашению с...</h2>
      <WindowButtons />
    </WindowTitle>
    <ActionBar><Tool name="rowCursor" /></ActionBar>
    <ListBody>
      <ListBox>
        <ListHead />
        <ListRow />
      </ListBox>
    </ListBody>
  </FloatWindow>
);

const ElementWindow = () => (
  <FloatWindow $active $x={66} $y={67} $w={514} $h={483}>
    <WindowTitle $active>
      <Icon name="folder" />
      <h2>Способы отражения расходов по амортизации (погашению ...: Новый *</h2>
      <WindowButtons />
    </WindowTitle>
    <ActionBar>
      <TextButton type="button">Действия<Caret /></TextButton>
      <Divider />
      <Tool name="goto" off />
      <Divider />
      <Tool name="refresh" off /><Tool name="copyTo" />
      <Divider />
      <Tool name="help" />
      <TextButton type="button"><Icon name="tips" />Советы</TextButton>
    </ActionBar>
    <DialogBody>
      <DialogRow>
        <label htmlFor="name">Наименование:</label>
        <Field><input id="name" defaultValue="Амортизация  ОС  ОХР" /></Field>
        <label htmlFor="code">Код:</label>
        <Field $width={64} $locked><input id="code" /></Field>
      </DialogRow>
      <DialogRow>
        <label htmlFor="org">Организация:</label>
        <Field $locked>
          <input id="org" defaultValue="ЭПОС" />
          <button type="button" disabled>...</button>
          <LookupButton />
        </Field>
      </DialogRow>
      <WaysSection>
        <GroupTitle>Способы</GroupTitle>
        <RowTools>
          <Tool name="rowNew" /><Tool name="rowAdd" /><Tool name="rowEdit" /><Tool name="rowDelete" />
          <Tool name="rowSave" /><Tool name="up" /><Tool name="down" /><Tool name="sortAsc" /><Tool name="sortDesc" />
        </RowTools>
        <GridBox>
          <Grid>
            <colgroup>
              <col width="28" /><col width="80" /><col width="116" /><col width="88" /><col width="116" /><col />
            </colgroup>
            <thead>
              <tr>
                <HeadCell rowSpan={3}>№</HeadCell>
                <HeadCell rowSpan={3}>Счет затрат</HeadCell>
                <HeadCell $current>Субконто 1</HeadCell>
                <HeadCell rowSpan={3}>Счет затрат (НУ)</HeadCell>
                <HeadCell rowSpan={3}>Субконто 1 (НУ)</HeadCell>
                <HeadCell rowSpan={3}>К.</HeadCell>
              </tr>
              <tr><HeadCell>Субконто 2</HeadCell></tr>
              <tr><HeadCell>Субконто 3</HeadCell></tr>
            </thead>
            <tbody>
              <tr>
                <Cell rowSpan={3} $right>1</Cell>
                <Cell rowSpan={3} $tone="yellow">26</Cell>
                <Cell $selected>администрация</Cell>
                <Cell rowSpan={3} $tone="blue">26.02</Cell>
                <Cell $tone="blue">администрация</Cell>
                <Cell rowSpan={3} $right>1,000</Cell>
              </tr>
              <tr><Cell $tone="yellow" /><Cell $tone="blue" /></tr>
              <tr><Cell $tone="yellow" /><Cell $tone="blue" /></tr>
            </tbody>
          </Grid>
        </GridBox>
      </WaysSection>
      <DialogRow>
        <label htmlFor="note">Комментарий:</label>
        <Field><input id="note" /></Field>
      </DialogRow>
    </DialogBody>
    <ActionBar $end>
      <TextButton type="button" $pad={5} $bold>OK</TextButton>
      <Divider />
      <TextButton type="button" $pad={5}>Записать</TextButton>
      <Divider />
      <TextButton type="button" $pad={5}>Закрыть</TextButton>
    </ActionBar>
  </FloatWindow>
);

const App = () => {
  return (
    <Screen>
      <GlobalStyle />
      <AppTitle>
        <Icon name="v8" />
        <h1>1С:Предприятие - Бухгалтерия предприятия, редакция 1.6</h1>
        <CaptionButton type="button" aria-label="Свернуть"><MinGlyph /></CaptionButton>
        <CaptionButton type="button" aria-label="Восстановить"><RestoreGlyph /></CaptionButton>
        <CaptionButton type="button" aria-label="Закрыть" $close><CloseGlyph /></CaptionButton>
      </AppTitle>
      <MenuBar>
        <Grip $space={-2} />
        {menu.map(([key, rest]) => (
          <a href="#menu" key={rest}>{key && <u>{key}</u>}{rest}</a>
        ))}
        <a href="#menu">Сп<u>р</u>авка</a>
      </MenuBar>
      <MainToolbars />

      <Workspace>
        <DocumentWindow />
        <ListWindow />
        <ElementWindow />
      </Workspace>

      <WindowTabs>
        <WindowTab type="button"><Icon name="folderOpen" />Принятие к учету ОС</WindowTab>
        <WindowTab type="button"><Icon name="doc" />...: Оборудование. Проведен</WindowTab>
        <WindowTab type="button"><Icon name="cabinet" />Способы отражения расход...</WindowTab>
        <WindowTab type="button" $active><Icon name="folder" />Способы отражен...: Новый *</WindowTab>
      </WindowTabs>
      <StatusBar>
        <StatusCell $wide>Для получения подсказки нажмите F1</StatusCell>
        <StatusCell $off>CAP</StatusCell>
        <StatusCell>NUM</StatusCell>
      </StatusBar>
      <TaskBar>
        <StartButton type="button"><Icon name="flag" />пуск</StartButton>
        <QuickLaunch>
          <Tool name="pda" /><Tool name="winamp" /><Tool name="ie" /><Tool name="player" />
          <i>»</i>
        </QuickLaunch>
        <Tasks>
          <TaskButton type="button"><Icon name="winamp" />32. 009 Корн...</TaskButton>
          <TaskButton type="button"><Icon name="word" />Практическ...</TaskButton>
          <TaskButton type="button"><Icon name="word" />Занятие 6 - ...</TaskButton>
          <TaskButton type="button" $active><Icon name="v8" />1С:Предпри...</TaskButton>
          <TaskButton type="button"><Icon name="netop" />NetOp Teach...</TaskButton>
        </Tasks>
        <Language><span>RU</span><Icon name="langHelp" /></Language>
        <Tray>
          <TrayToggle type="button" aria-label="Скрытые значки">‹</TrayToggle>
          <Icon name="network" /><Icon name="shield" /><Icon name="ati" />
          <time>16:31</time>
        </Tray>
      </TaskBar>
    </Screen>
  );
};

export default App;
